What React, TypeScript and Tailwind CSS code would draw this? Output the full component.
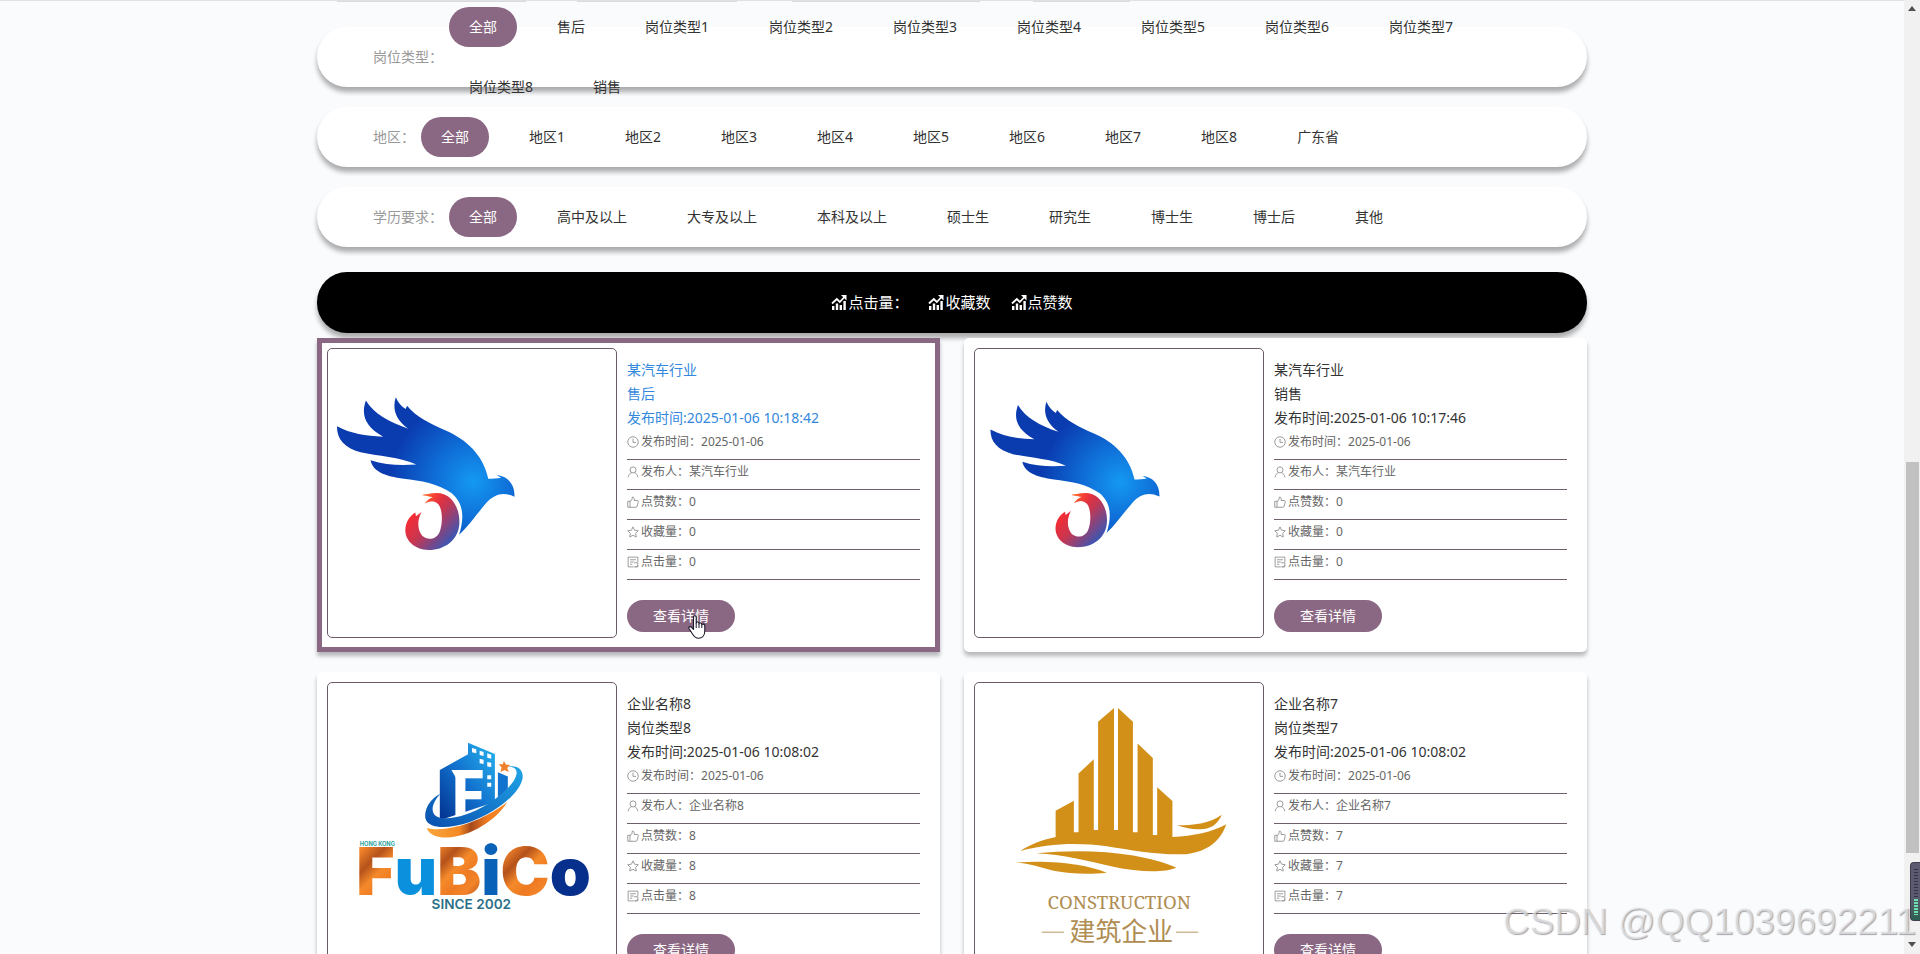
import type { ReactNode } from "react";
import clsx from "clsx";

type Filter = { label: string; options: string[] };

type Job = {
  company: string;
  position: string;
  time: string;
  publisher: string;
  count: number;
  logo: ReactNode;
  hovered?: boolean;
};

const filters: Filter[] = [
  {
    label: "岗位类型",
    options: [
      "全部", "售后", "岗位类型1", "岗位类型2", "岗位类型3", "岗位类型4",
      "岗位类型5", "岗位类型6", "岗位类型7", "岗位类型8", "销售",
    ],
  },
  {
    label: "地区",
    options: ["全部", "地区1", "地区2", "地区3", "地区4", "地区5", "地区6", "地区7", "地区8", "广东省"],
  },
  {
    label: "学历要求",
    options: ["全部", "高中及以上", "大专及以上", "本科及以上", "硕士生", "研究生", "博士生", "博士后", "其他"],
  },
];

function BirdLogo({ id }: { id: string }) {
  return (
    <svg viewBox="30 33 912 912" className="h-full w-full">
      <defs>
        <radialGradient id={`${id}-body`} gradientUnits="userSpaceOnUse" cx="490" cy="455" r="250">
          <stop offset="0" stopColor="#1499f2" />
          <stop offset="0.45" stopColor="#0f6fd8" />
          <stop offset="1" stopColor="#0a3cb0" />
        </radialGradient>
        <linearGradient id={`${id}-ring`} gradientUnits="userSpaceOnUse" x1="320" y1="530" x2="425" y2="625">
          <stop offset="0" stopColor="#fb2a30" />
          <stop offset="0.45" stopColor="#c83650" />
          <stop offset="1" stopColor="#4254ae" />
        </linearGradient>
        <linearGradient id={`${id}-flame`} gradientUnits="userSpaceOnUse" x1="335" y1="495" x2="400" y2="520">
          <stop offset="0" stopColor="#ff8a2a" />
          <stop offset="1" stopColor="#fb2a30" stopOpacity="0" />
        </linearGradient>
      </defs>
      <path
        fill={`url(#${id}-body)`}
        d="M79 288C120 310 165 318 218 319C165 290 150 255 166 210C190 250 235 275 294 295C256 268 245 236 256 200C264 218 274 228 286 236L290 226C318 260 360 280 405 300C470 328 520 375 535 446C548 446 562 446 574 443L560 435C592 437 616 462 614 500C580 485 555 492 530 518C500 552 475 590 447 615C464 560 460 520 425 490C385 460 330 452 280 446C225 438 187 425 180 390C225 405 270 406 318 403C270 380 200 378 150 366C100 352 78 325 79 288Z"
      />
      <path
        fill={`url(#${id}-ring)`}
        d="M335 495C352 493 366 489 382 489C425 490 449 535 448 578C447 630 405 661 355 661C312 660 284 632 285 600C286 575 299 558 315 548L317 559L334 546C320 570 321 600 336 618C352 633 378 629 388 607C399 578 397 540 385 524C373 510 358 513 344 521C350 512 358 505 368 502C356 498 346 496 335 495Z"
      />
      <path
        fill={`url(#${id}-flame)`}
        d="M335 495C352 493 366 489 382 489C400 490 415 500 425 515L385 524C373 510 358 513 344 521C350 512 358 505 368 502Z"
      />
    </svg>
  );
}

function FubicoLogo() {
  return (
    <svg viewBox="52 66 868 868" className="h-full w-full">
      <defs>
        <linearGradient id="fb-tower" x1="1" y1="0" x2="0" y2="1">
          <stop offset="0" stopColor="#27b4ee" />
          <stop offset="0.5" stopColor="#1273cf" />
          <stop offset="1" stopColor="#03308f" />
        </linearGradient>
        <linearGradient id="fb-orbit" x1="0" y1="1" x2="1" y2="0">
          <stop offset="0" stopColor="#0a4fae" />
          <stop offset="1" stopColor="#1fa5e8" />
        </linearGradient>
        <linearGradient id="fb-swoosh" x1="0" y1="0" x2="1" y2="0">
          <stop offset="0" stopColor="#f9a63a" />
          <stop offset="0.4" stopColor="#f58a25" />
          <stop offset="0.55" stopColor="#a6491a" />
          <stop offset="0.75" stopColor="#f07c22" />
          <stop offset="1" stopColor="#f58a25" />
        </linearGradient>
        <linearGradient id="fb-orange" gradientUnits="userSpaceOnUse" x1="150" y1="570" x2="260" y2="680" spreadMethod="repeat">
          <stop offset="0" stopColor="#f3842a" />
          <stop offset="0.3" stopColor="#b4521b" />
          <stop offset="0.55" stopColor="#f58a2a" />
          <stop offset="0.8" stopColor="#ee7a22" />
          <stop offset="1" stopColor="#f3842a" />
        </linearGradient>
      </defs>
      <path fill="url(#fb-tower)" d="M389 328L474 281V246L555 280V425L389 480Z" />
      <path fill="#1273cf" d="M564 335L594 348V405L564 420Z" />
      <g fill="#fff">
        <path d="M486 262l13 4v12l-13-3zM509 270l12 4v12l-12-3zM532 278l12 4v12l-12-3zM509 294l12 3v13l-12-2zM532 304l12 2v13l-12-1zM532 344h12v12h-12zM532 367h12v12h-12z" />
        <path d="M424 328H448V352H438Z" />
      </g>
      <text x="418" y="472" fontFamily="Open Sans, sans-serif" fontWeight="700" fontSize="200" fill="#fff">F</text>
      <path
        fill="url(#fb-orbit)"
        d="M595 318C625 312 643 330 638 355C628 400 560 455 480 485C410 508 355 505 346 475C340 448 360 415 391 400C368 425 360 450 375 465C400 485 470 470 535 430C590 395 625 355 620 332C617 322 608 319 595 318Z"
      />
      <path fill="url(#fb-swoosh)" d="M350 503C420 520 530 475 592 425C560 480 480 530 410 532C378 532 355 522 350 503Z" />
      <path fill="#ee7f2c" d="M582 300L588 312L601 313L592 322L597 334L584 328L572 334L575 321L567 311L579 311Z" />
      <text x="148" y="557" fontFamily="Inter, sans-serif" fontWeight="700" fontSize="17" fill="#2aa39c">HONG KONG</text>
      <text x="137" y="704" fontFamily="Inter, sans-serif" fontWeight="900" fontSize="198">
        <tspan fill="url(#fb-orange)">F</tspan>
        <tspan fill="#0a90dc">u</tspan>
        <tspan fill="url(#fb-orange)">B</tspan>
        <tspan fill="#0a62b8">i</tspan>
        <tspan fill="url(#fb-orange)">C</tspan>
        <tspan fill="#06308c">o</tspan>
      </text>
      <text x="484" y="748" textAnchor="middle" fontFamily="Inter, sans-serif" fontWeight="600" fontSize="41" fill="#2c7088">
        SINCE 2002
      </text>
    </svg>
  );
}

function ConstructionLogo() {
  return (
    <svg viewBox="43 66 868 868" className="h-full w-full">
      <path
        fill="#d39019"
        d="M180 572C205 555 245 538 286 530V451L341 421V516H355V339L401 296V509H414V183L462 141V509H474V141L519 183V516H533V248L579 292V524H592V380L638 422V530C700 528 760 515 800 492C785 540 745 575 680 582C590 585 520 570 440 558C350 545 260 550 180 572Z"
      />
      <path fill="#d39019" d="M652 495C700 495 750 490 787 463C775 490 755 507 722 507C695 508 672 502 652 495Z" />
      <path fill="#d39019" d="M228 579C320 570 430 570 520 586C570 595 615 607 650 623C610 640 530 635 460 620C380 602 310 582 228 579Z" />
      <path fill="#d39019" d="M166 607C230 602 300 605 350 614C385 620 415 628 440 638C390 643 330 642 280 632C240 622 210 610 166 607Z" />
      <text x="478" y="748" textAnchor="middle" fontFamily="Noto Serif, Liberation Serif, serif" fontSize="56" fill="#b08d52">
        CONSTRUCTION
      </text>
      <path stroke="#b5975c" strokeWidth="3" d="M244 817H311M649 817H716" />
      <text x="484" y="843" textAnchor="middle" fontFamily="Noto Sans CJK SC, sans-serif" fontSize="78" fill="#b08d52">
        建筑企业
      </text>
    </svg>
  );
}

const jobs: Job[] = [
  {
    company: "某汽车行业",
    position: "售后",
    time: "2025-01-06 10:18:42",
    publisher: "某汽车行业",
    count: 0,
    logo: <BirdLogo id="bird-a" />,
    hovered: true,
  },
  {
    company: "某汽车行业",
    position: "销售",
    time: "2025-01-06 10:17:46",
    publisher: "某汽车行业",
    count: 0,
    logo: <BirdLogo id="bird-b" />,
  },
  {
    company: "企业名称8",
    position: "岗位类型8",
    time: "2025-01-06 10:08:02",
    publisher: "企业名称8",
    count: 8,
    logo: <FubicoLogo />,
  },
  {
    company: "企业名称7",
    position: "岗位类型7",
    time: "2025-01-06 10:08:02",
    publisher: "企业名称7",
    count: 7,
    logo: <ConstructionLogo />,
  },
];

const icons = {
  clock: (
    <>
      <circle cx="8" cy="8" r="7" />
      <path d="M8 3.5V8.5H12" />
    </>
  ),
  user: (
    <>
      <circle cx="8" cy="5.2" r="4" />
      <path d="M1.5 15C1.8 12 3.5 10 6 9M14.5 15C14.2 12 12.5 10 10 9" />
    </>
  ),
  like: <path d="M1 7H4V15H1ZM4 7.5C6 6.5 7 4.5 7 1.5C9 1 10 2.5 9.5 6H14C15 6 15.2 7 15 8L13.6 13.5C13.3 14.6 12.8 15 12 15H4" />,
  star: <path d="M8 1.2L10.1 5.6L15 6.3L11.5 9.8L12.3 14.7L8 12.4L3.7 14.7L4.5 9.8L1 6.3L5.9 5.6Z" />,
  form: (
    <>
      <path d="M14.5 8V1.5H1.5V14.5H9M4 5H12M4 8H9M4 11H7" />
      <path d="M9.5 9H14.5V11C14.5 13 13 14.5 11 14.5M9.5 14.5L14.5 14.5V12" />
    </>
  ),
};

function Icon({ name }: { name: keyof typeof icons }) {
  return (
    <svg viewBox="0 0 16 16" className="h-3 w-3 shrink-0 fill-none stroke-[#888]" strokeWidth="1.1">
      {icons[name]}
    </svg>
  );
}

function ChartIcon() {
  return (
    <svg viewBox="0 0 16 16" className="h-4 w-4 fill-white">
      <path d="M1 12h2.4v4H1zM4.8 9.5h2.4V16H4.8zM8.6 11H11v5H8.6zM12.4 7h2.4v9h-2.4z" />
      <path d="M1 9.5L5.8 5L8.8 8L13.5 3" fill="none" stroke="#fff" strokeWidth="1.8" />
      <path d="M10 1H15.5V6.5Z" />
    </svg>
  );
}

function FilterRow({ label, options }: Filter) {
  return (
    <div className="flex h-[60px] items-center rounded-[30px] bg-white pr-[60px] pl-14 shadow-[0_5px_5px_rgba(0,0,0,0.32)]">
      <span className="mr-1.5 shrink-0 text-[#999]">{label}：</span>
      <div className="relative z-10 flex flex-wrap gap-x-5">
        {options.map((option, i) => (
          <div key={option} className="flex h-[60px] items-center">
            <button
              className={clsx(
                "h-10 rounded-[20px] px-5",
                i === 0 ? "bg-[#8a6782] text-white" : "text-[#333]",
              )}
            >
              {option}
            </button>
          </div>
        ))}
      </div>
    </div>
  );
}

function JobCard({ job }: { job: Job }) {
  const rows: { icon: keyof typeof icons; label: string; value: string | number }[] = [
    { icon: "clock", label: "发布时间", value: job.time.slice(0, 10) },
    { icon: "user", label: "发布人", value: job.publisher },
    { icon: "like", label: "点赞数", value: job.count },
    { icon: "star", label: "收藏量", value: job.count },
    { icon: "form", label: "点击量", value: job.count },
  ];

  return (
    <article
      className={clsx(
        "flex h-[314px] bg-white shadow-[0_4px_4px_rgba(0,0,0,0.27)]",
        job.hovered ? "border-5 border-[#8a6782] py-[5px] pr-[15px] pl-[5px]" : "rounded-[5px] py-2.5 pr-5 pl-2.5",
      )}
    >
      <div className="h-[290px] w-[290px] shrink-0 overflow-hidden rounded-[5px] border border-[#6d5a69]">
        <div className={clsx("h-full w-full", job.hovered && "scale-105")}>{job.logo}</div>
      </div>
      <div className="min-w-0 flex-1 pt-2.5 pl-2.5">
        <div className={clsx("leading-6", job.hovered ? "text-[#3388dd]" : "text-[#333]")}>
          <h3>{job.company}</h3>
          <p>{job.position}</p>
          <p>发布时间:{job.time}</p>
        </div>
        <ul className="text-xs text-[#666]">
          {rows.map((row) => (
            <li key={row.label} className="flex h-[30px] items-center gap-0.5 border-b border-[#6d5f6b] pb-1.5">
              <Icon name={row.icon} />
              <span>
                {row.label}：{row.value}
              </span>
            </li>
          ))}
        </ul>
        <div className="relative mt-5 w-[108px]">
          <button className="h-8 w-full rounded-2xl bg-[#8a6782] text-white">查看详情</button>
          {job.hovered && <HandCursor />}
        </div>
      </div>
    </article>
  );
}

function HandCursor() {
  return (
    <svg viewBox="0 0 18 24" className="absolute top-[15px] left-[61px] h-6 w-[18px]">
      <path
        fill="#fff"
        stroke="#1a1a2a"
        strokeWidth="1.1"
        strokeLinejoin="round"
        d="M5.5 2C5.5 .3 8.2 .3 8.2 2V8C8.2 6.6 11 6.6 11 8.2V9C11 7.6 13.8 7.6 13.8 9.2V10C13.8 8.8 16.8 8.8 16.8 10.5V16C16.8 20.5 14 23.2 10.5 23.2C7 23.2 6 21.5 4.5 19L1 13.5C.3 12 2.2 10.8 3.6 12.4L5.5 14.5Z"
      />
      <path fill="none" stroke="#1a1a2a" strokeWidth="1" d="M8.2 8V13M11 9V13M13.8 10V13" />
    </svg>
  );
}

function ScrollTrack() {
  return (
    <div className="flex w-4 shrink-0 flex-col items-center bg-[#f1f1f1]">
      <svg viewBox="0 0 8 5" className="mt-1.5 mb-[451px] h-[5px] w-2 fill-[#505050]">
        <path d="M0 5H8L4 0Z" />
      </svg>
      <div className="h-[391px] w-[13px] bg-[#c1c1c1]" />
      <svg viewBox="0 0 8 5" className="mt-auto mb-[7px] h-[5px] w-2 fill-[#505050]">
        <path d="M0 0H8L4 5Z" />
      </svg>
    </div>
  );
}

export default function App() {
  return (
    <div className="relative flex h-screen overflow-hidden bg-[#fafbfd] font-['Noto_Sans','Noto_Sans_CJK_SC',sans-serif] text-sm">
      <main className="min-w-0 flex-1 border-t border-[#dfe1e4]">
        <div className="mx-auto w-full max-w-[1270px]">
          <div className="mb-[25px] flex h-px pl-5">
            <div className="mr-[51px] h-px w-[189px] bg-[#d9dadd]" />
            <div className="mr-[55px] h-px w-40 bg-[#d9dadd]" />
            <div className="mr-[53px] h-px w-[188px] bg-[#d9dadd]" />
            <div className="h-px w-[97px] bg-[#d9dadd]" />
          </div>

          {/* Filters */}
          <div className="flex flex-col gap-5">
            {filters.map((filter) => (
              <FilterRow key={filter.label} {...filter} />
            ))}
          </div>

          {/* Sorting */}
          <div className="mt-[25px] mb-[5px] flex h-[61px] items-center justify-center gap-5 rounded-[30px] bg-black text-[15px] text-white shadow-[0_5px_5px_rgba(0,0,0,0.32)]">
            {["点击量：", "收藏数", "点赞数"].map((name) => (
              <button key={name} className="flex items-center gap-px">
                <ChartIcon />
                {name}
              </button>
            ))}
          </div>

          {/* Jobs */}
          <div className="grid grid-cols-2 gap-x-6 gap-y-5">
            {jobs.map((job) => (
              <JobCard key={job.company + job.position} job={job} />
            ))}
          </div>
        </div>
      </main>

      <ScrollTrack />

      {/* Level meter docked to the window edge */}
      <div className="absolute right-0 bottom-[33px] flex h-[59px] w-2.5 flex-col items-center rounded-l-[4px] border border-r-0 border-[#3d3d4d] bg-linear-to-b from-[#5c5a70] from-60% to-[#2b5f50] pt-1.5">
        <div className="h-[30px] w-1 bg-[repeating-linear-gradient(#34324a_0_1px,transparent_1px_3px)]" />
        <div className="h-4 w-1 bg-[repeating-linear-gradient(#6fe0b0_0_2px,transparent_2px_3px)]" />
      </div>

      <p className="absolute right-1 bottom-3 font-['Liberation_Sans',sans-serif] text-[37px] leading-10 whitespace-nowrap text-[#f6f6f8]/60 [text-shadow:1px_1px_1px_rgba(120,120,125,0.65)]">
        CSDN @QQ1039692211
      </p>
    </div>
  );
}
